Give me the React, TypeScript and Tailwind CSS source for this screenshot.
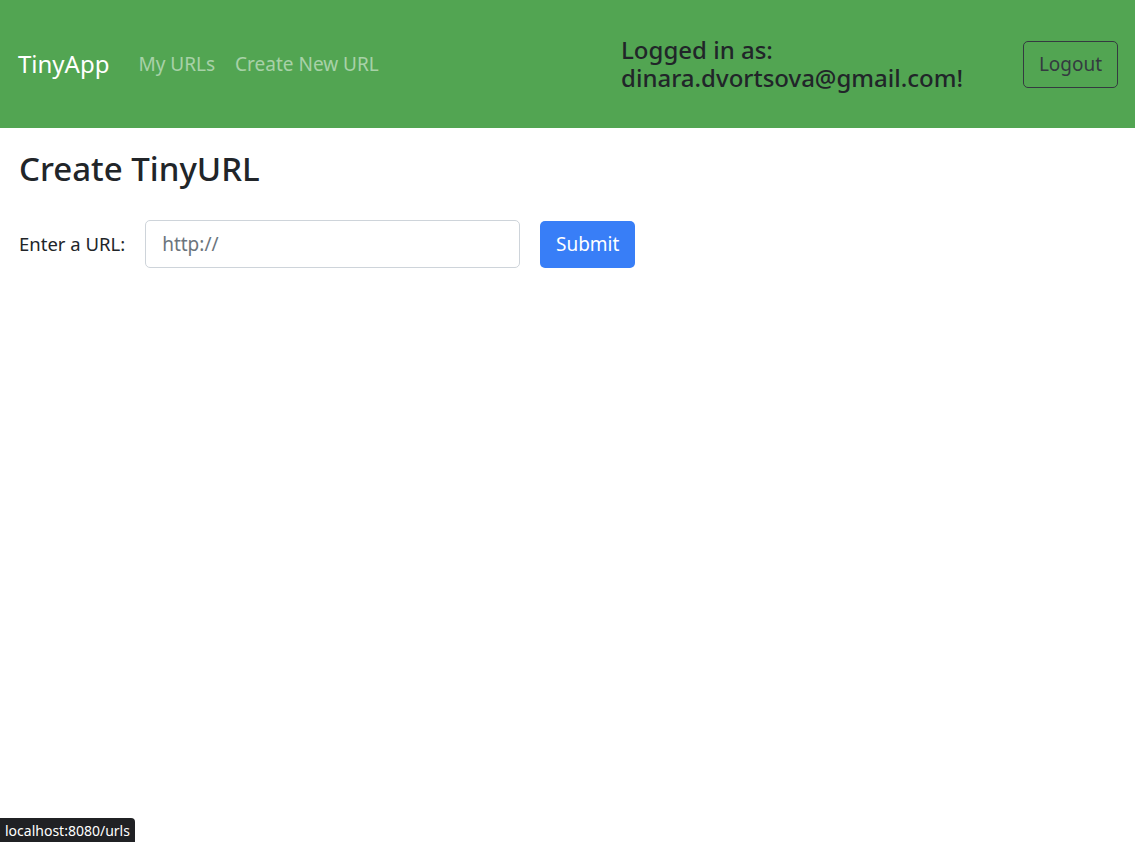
export default function App() {
  return (
    <div className="min-h-screen bg-white font-['Noto_Sans',sans-serif] text-[#212529]">
      {/* Navbar */}
      <nav className="flex h-[128px] items-center bg-[#52a552] pl-[18px] pr-[17px]">
        <a href="#" className="mr-[29px] text-[24px] text-white">
          TinyApp
        </a>
        <div className="flex items-center gap-[20px] text-[19px] text-white/50">
          <a href="#">My URLs</a>
          <a href="#">Create New URL</a>
        </div>
        <div className="ml-auto flex items-center">
          <h5 className="text-[24px] font-medium leading-[28px] text-[#212529]">
            Logged in as:
            <br />
            dinara.dvortsova@gmail.com!
          </h5>
          <button className="ml-[60px] h-[47px] w-[95px] rounded-[5px] border border-[#343a40] text-[19px] text-[#343a40]">
            Logout
          </button>
        </div>
      </nav>

      {/* Main */}
      <main className="px-[19px] pt-[20px]">
        <h3 className="text-[33px] font-medium leading-[42px]">Create TinyURL</h3>
        <form className="mt-[30px] flex items-center" onSubmit={(e) => e.preventDefault()}>
          <label className="mr-[20px] text-[18.5px]">Enter a URL:</label>
          <input
            type="text"
            placeholder="http://"
            className="h-[48px] w-[375px] rounded-[5px] border border-[#ced4da] px-[16px] text-[19px] placeholder:text-[#6c757d] outline-none"
          />
          <button className="ml-[20px] h-[47px] w-[95px] rounded-[5px] bg-[#387ef7] text-[19px] text-white">
            Submit
          </button>
        </form>
      </main>

      {/* Browser status tooltip */}
      <div className="fixed bottom-0 left-0 flex h-[24px] items-center rounded-tr-[4px] bg-[#202124] px-[5px] text-[14px] text-white">
        localhost:8080/urls
      </div>
    </div>
  );
}
